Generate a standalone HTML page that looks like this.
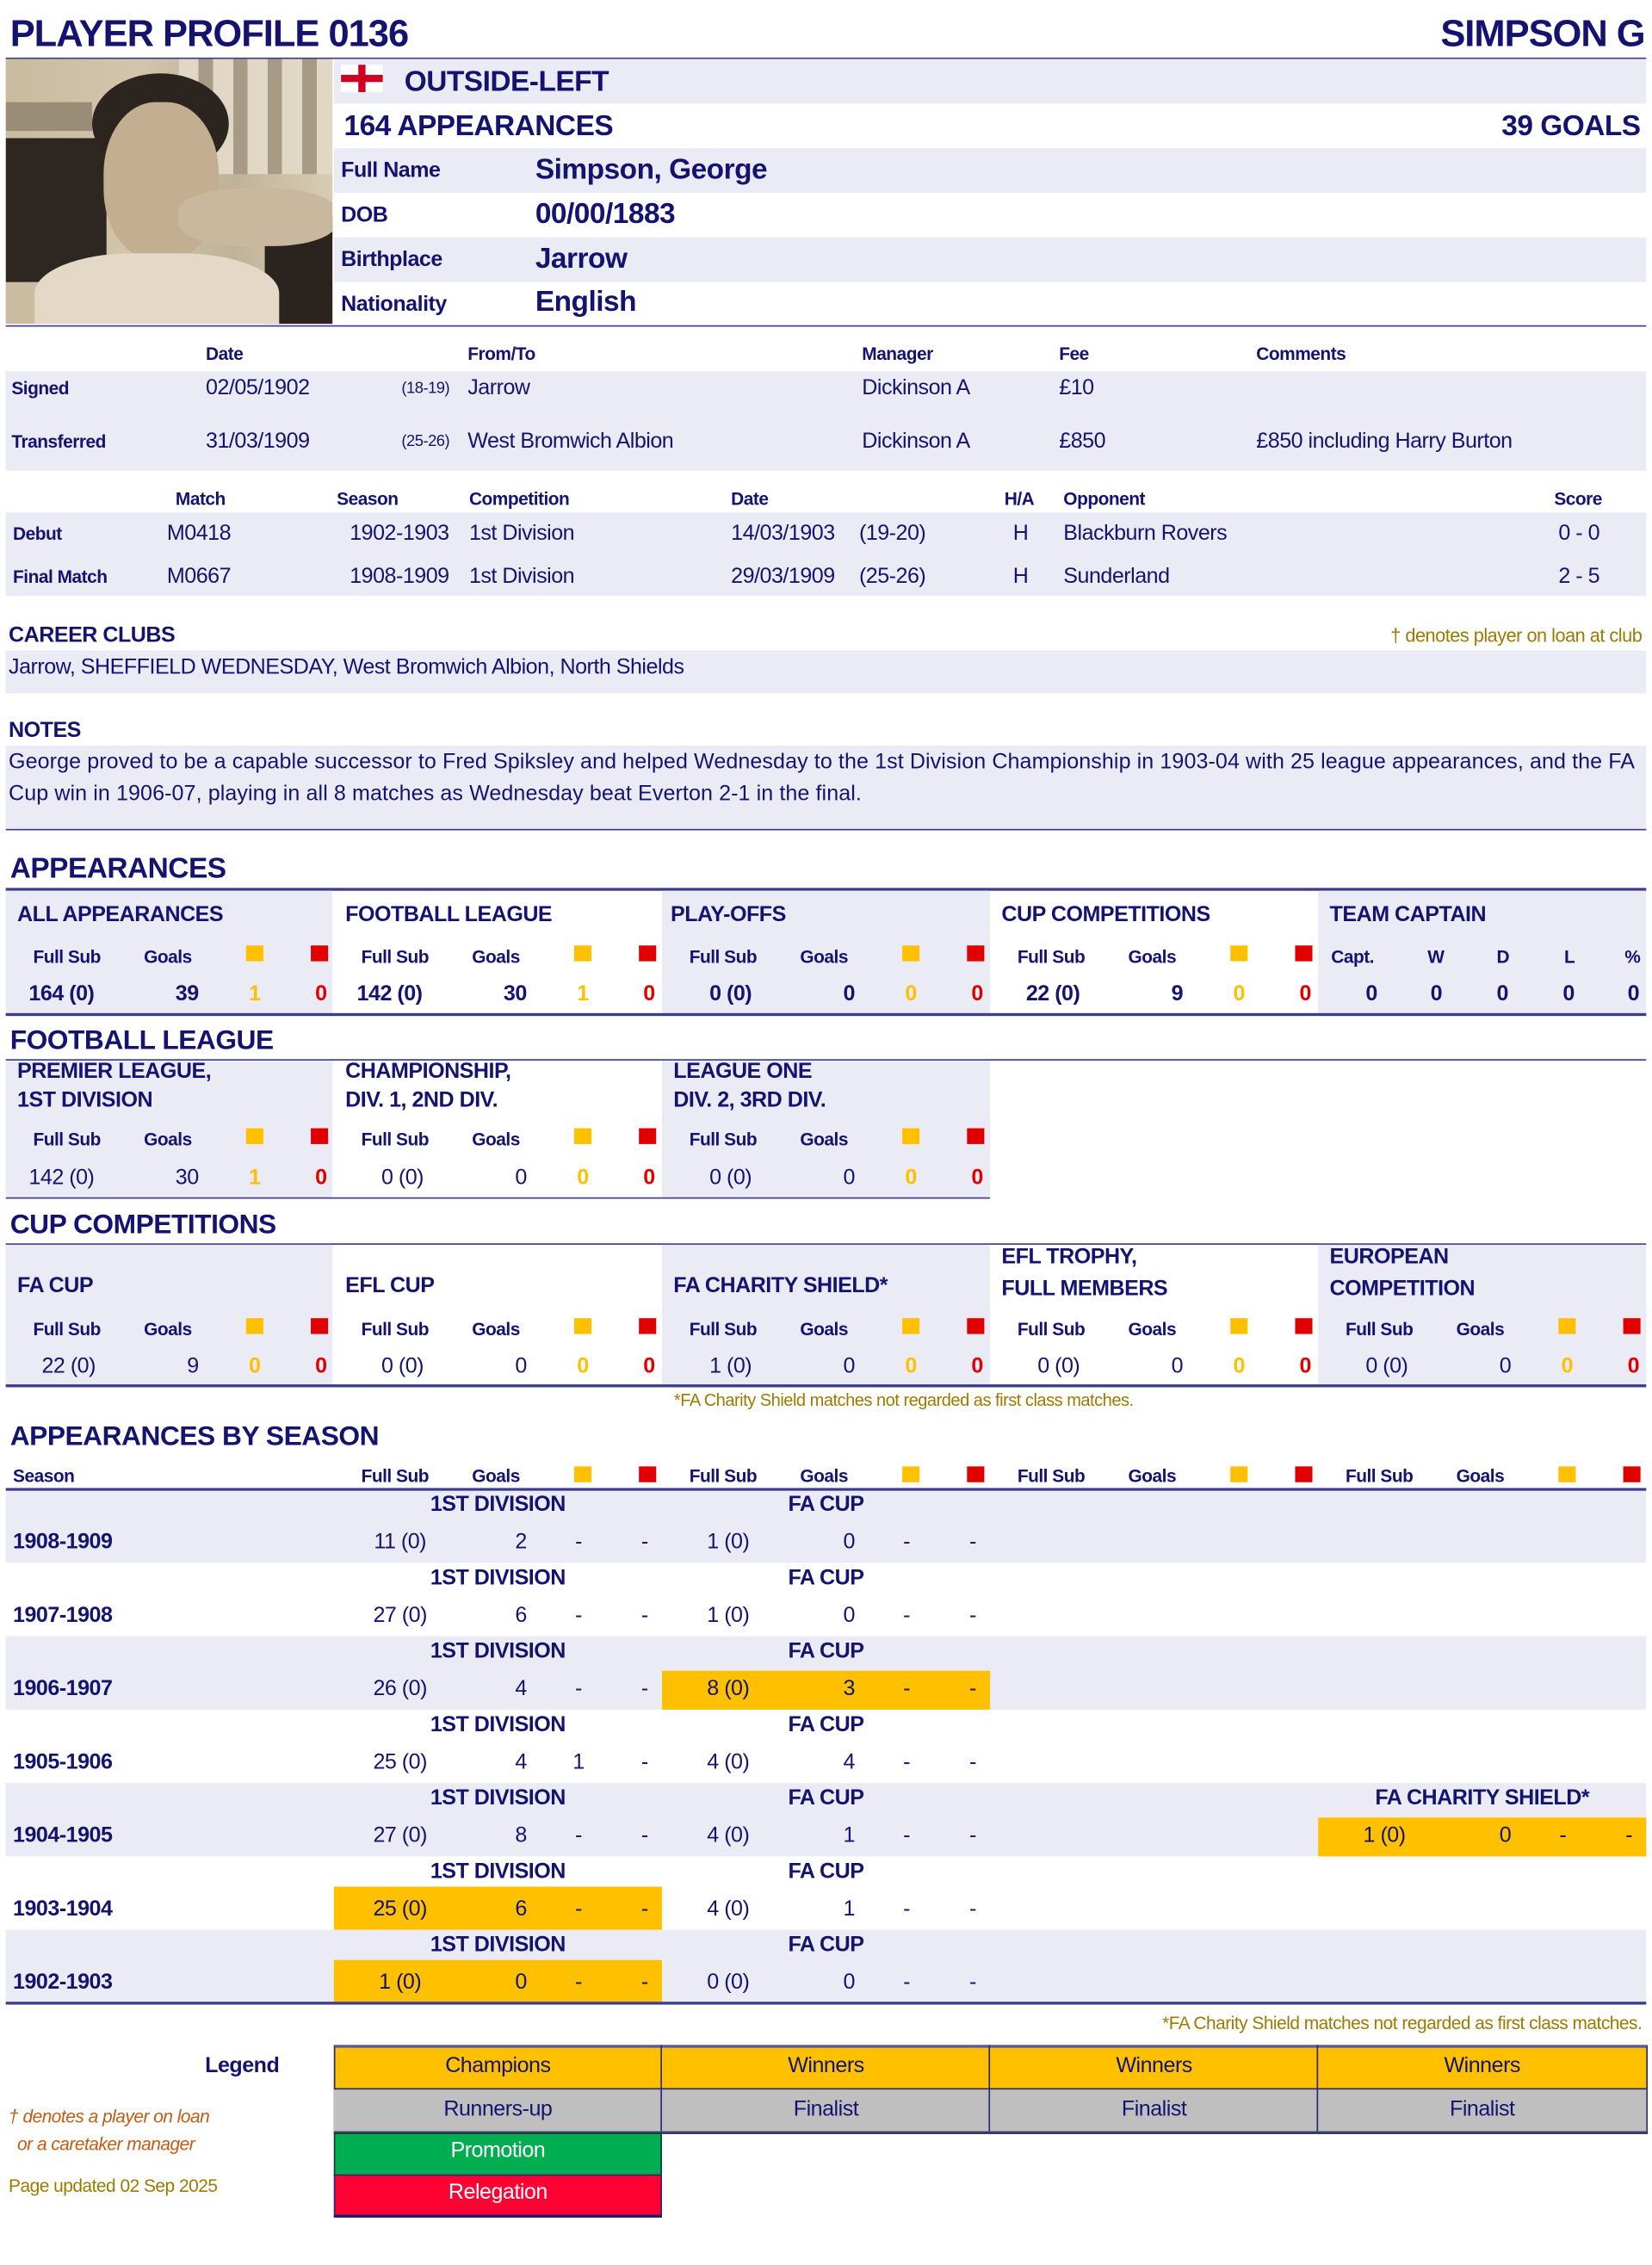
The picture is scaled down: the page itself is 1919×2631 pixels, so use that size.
<!DOCTYPE html>
<html><head><meta charset="utf-8">
<style>
html,body{margin:0;padding:0;background:#fff;}
body{width:1919px;height:2631px;overflow:hidden;position:relative;}
#w{position:absolute;left:0;top:0;width:1148px;height:1574px;transform:scale(1.6716);transform-origin:0 0;font-family:"Liberation Sans",Arial,sans-serif;color:#141470;}
.t{position:absolute;white-space:nowrap;line-height:20px;font-size:15px;letter-spacing:-0.3px;}
.b{font-weight:bold;}
.r{text-align:right;}
.c{text-align:center;}
.bx{position:absolute;}
.lav{background:#ebebf5;}
.ln{position:absolute;height:1px;background:#3c3c8c;}
.ln2{position:absolute;height:2px;background:#3c3c8c;}
.sh{font-size:12.5px;font-weight:bold;}
.y{position:absolute;width:12px;height:11px;background:#ffc000;}
.rd{position:absolute;width:12px;height:11px;background:#e00000;}
.yn{color:#ffc000;font-weight:bold;}
.rn{color:#e00000;font-weight:bold;}
.gold{color:#9c7a00;}
.hl{position:absolute;background:#ffc000;}
</style></head><body><div id="w">

<div class="t b" style="left:7px;top:8px;font-size:26px;line-height:30px;letter-spacing:-0.6px">PLAYER PROFILE 0136</div>
<div class="t b r" style="right:5px;top:8px;font-size:26px;line-height:30px;letter-spacing:-0.6px">SIMPSON G</div>
<div class="ln" style="left:4px;top:40px;width:1140px"></div>

<div class="bx" style="left:4px;top:41px;width:227px;height:184px;overflow:hidden;background:#cdbfa5">
 <div class="bx" style="left:0;top:0;width:227px;height:184px;background:linear-gradient(90deg,#c9bba0 0,#d2c5ab 40%,#bfb298 70%,#d8ccb3 100%)"></div>
 <div class="bx" style="left:0;top:55px;width:70px;height:100px;background:#2d2621"></div>
 <div class="bx" style="left:0;top:30px;width:60px;height:20px;background:#9a8d78"></div>
 <div class="bx" style="left:180px;top:110px;width:50px;height:80px;background:#2a231e"></div>
 <div class="bx" style="left:120px;top:0;width:107px;height:80px;background:repeating-linear-gradient(90deg,#e0d7c5 0,#e0d7c5 14px,#a89b86 14px,#a89b86 24px)"></div>
 <div class="bx" style="left:60px;top:10px;width:95px;height:70px;border-radius:50%;background:#2b241f"></div>
 <div class="bx" style="left:68px;top:30px;width:80px;height:110px;border-radius:45%;background:#c3ae92"></div>
 <div class="bx" style="left:120px;top:90px;width:110px;height:40px;border-radius:40%;background:#c9b89d"></div>
 <div class="bx" style="left:20px;top:135px;width:170px;height:70px;border-radius:40% 40% 0 0;background:#e3d9c6"></div>
</div>

<div class="bx lav" style="left:232px;top:41px;width:912px;height:31px"></div>
<div class="bx lav" style="left:232px;top:103px;width:912px;height:31px"></div>
<div class="bx lav" style="left:232px;top:165px;width:912px;height:31px"></div>
<div class="bx" style="left:237px;top:45px;width:29px;height:19px;background:#fff">
 <div class="bx" style="left:12px;top:0;width:5px;height:19px;background:#d00020"></div>
 <div class="bx" style="left:0;top:7px;width:29px;height:5px;background:#d00020"></div>
</div>
<div class="t b" style="left:281px;top:45px;font-size:20px;line-height:24px">OUTSIDE-LEFT</div>
<div class="t b" style="left:239px;top:76px;font-size:20px;line-height:24px">164 APPEARANCES</div>
<div class="t b r" style="right:8px;top:76px;font-size:20px;line-height:24px">39 GOALS</div>
<div class="t b" style="left:237px;top:109px">Full Name</div>
<div class="t b" style="left:372px;top:106px;font-size:20px;line-height:24px">Simpson, George</div>
<div class="t b" style="left:237px;top:140px">DOB</div>
<div class="t b" style="left:372px;top:137px;font-size:20px;line-height:24px">00/00/1883</div>
<div class="t b" style="left:237px;top:171px">Birthplace</div>
<div class="t b" style="left:372px;top:168px;font-size:20px;line-height:24px">Jarrow</div>
<div class="t b" style="left:237px;top:202px">Nationality</div>
<div class="t b" style="left:372px;top:198px;font-size:20px;line-height:24px">English</div>
<div class="ln" style="left:4px;top:226px;width:1140px"></div>

<div class="t sh" style="left:143px;top:236px">Date</div>
<div class="t sh" style="left:325px;top:236px">From/To</div>
<div class="t sh" style="left:599px;top:236px">Manager</div>
<div class="t sh" style="left:736px;top:236px">Fee</div>
<div class="t sh" style="left:873px;top:236px">Comments</div>
<div class="bx lav" style="left:4px;top:258px;width:1140px;height:69px"></div>
<div class="t sh" style="left:8px;top:260px">Signed</div>
<div class="t" style="left:143px;top:260px">02/05/1902</div>
<div class="t" style="left:279px;top:260px;font-size:11px">(18-19)</div>
<div class="t" style="left:325px;top:260px">Jarrow</div>
<div class="t" style="left:599px;top:260px">Dickinson A</div>
<div class="t" style="left:736px;top:260px">£10</div>
<div class="t sh" style="left:8px;top:297px">Transferred</div>
<div class="t" style="left:143px;top:297px">31/03/1909</div>
<div class="t" style="left:279px;top:297px;font-size:11px">(25-26)</div>
<div class="t" style="left:325px;top:297px">West Bromwich Albion</div>
<div class="t" style="left:599px;top:297px">Dickinson A</div>
<div class="t" style="left:736px;top:297px">£850</div>
<div class="t" style="left:873px;top:297px">£850 including Harry Burton</div>

<div class="t sh" style="left:122px;top:337px">Match</div>
<div class="t sh" style="left:234px;top:337px">Season</div>
<div class="t sh" style="left:326px;top:337px">Competition</div>
<div class="t sh" style="left:508px;top:337px">Date</div>
<div class="t sh" style="left:698px;top:337px">H/A</div>
<div class="t sh" style="left:739px;top:337px">Opponent</div>
<div class="t sh" style="left:1080px;top:337px">Score</div>
<div class="bx lav" style="left:4px;top:356px;width:1140px;height:58px"></div>
<div class="t sh" style="left:9px;top:361px">Debut</div>
<div class="t" style="left:116px;top:361px">M0418</div>
<div class="t" style="left:243px;top:361px">1902-1903</div>
<div class="t" style="left:326px;top:361px">1st Division</div>
<div class="t" style="left:508px;top:361px">14/03/1903</div>
<div class="t" style="left:597px;top:361px">(19-20)</div>
<div class="t" style="left:704px;top:361px">H</div>
<div class="t" style="left:739px;top:361px">Blackburn Rovers</div>
<div class="t" style="left:1083px;top:361px">0 - 0</div>
<div class="t sh" style="left:9px;top:391px">Final Match</div>
<div class="t" style="left:116px;top:391px">M0667</div>
<div class="t" style="left:243px;top:391px">1908-1909</div>
<div class="t" style="left:326px;top:391px">1st Division</div>
<div class="t" style="left:508px;top:391px">29/03/1909</div>
<div class="t" style="left:597px;top:391px">(25-26)</div>
<div class="t" style="left:704px;top:391px">H</div>
<div class="t" style="left:739px;top:391px">Sunderland</div>
<div class="t" style="left:1083px;top:391px">2 - 5</div>

<div class="t b" style="left:6px;top:432px">CAREER CLUBS</div>
<div class="t r gold" style="right:7px;top:432px;font-size:13px">† denotes player on loan at club</div>
<div class="bx lav" style="left:4px;top:452px;width:1140px;height:30px"></div>
<div class="t" style="left:6px;top:454px">Jarrow, SHEFFIELD WEDNESDAY, West Bromwich Albion, North Shields</div>

<div class="t b" style="left:6px;top:498px">NOTES</div>
<div class="bx lav" style="left:4px;top:518px;width:1140px;height:58px"></div>
<div class="t" style="left:6px;top:520px;letter-spacing:0.05px">George proved to be a capable successor to Fred Spiksley and helped Wednesday to the 1st Division Championship in 1903-04 with 25 league appearances, and the FA</div>
<div class="t" style="left:6px;top:542px;letter-spacing:0.05px">Cup win in 1906-07, playing in all 8 matches as Wednesday beat Everton 2-1 in the final.</div>
<div class="ln" style="left:4px;top:576px;width:1140px"></div>

<div class="t b" style="left:7px;top:592px;font-size:20px;line-height:24px">APPEARANCES</div>
<div class="ln2" style="left:4px;top:617px;width:1140px"></div>
<div class="bx lav" style="left:4px;top:619px;width:227px;height:86px"></div>
<div class="bx lav" style="left:460px;top:619px;width:228px;height:86px"></div>
<div class="bx lav" style="left:916px;top:619px;width:228px;height:86px"></div>

<div class="t b" style="left:12px;top:626px">ALL APPEARANCES</div>
<div class="t b" style="left:240px;top:626px">FOOTBALL LEAGUE</div>
<div class="t b" style="left:466px;top:626px">PLAY-OFFS</div>
<div class="t b" style="left:696px;top:626px">CUP COMPETITIONS</div>
<div class="t b" style="left:924px;top:626px">TEAM CAPTAIN</div>

<div class="t sh" style="left:23px;top:655px">Full Sub</div><div class="t sh" style="left:100px;top:655px">Goals</div><div class="y" style="left:171px;top:657px"></div><div class="rd" style="left:216px;top:657px"></div>
<div class="t sh" style="left:251px;top:655px">Full Sub</div><div class="t sh" style="left:328px;top:655px">Goals</div><div class="y" style="left:399px;top:657px"></div><div class="rd" style="left:444px;top:657px"></div>
<div class="t sh" style="left:479px;top:655px">Full Sub</div><div class="t sh" style="left:556px;top:655px">Goals</div><div class="y" style="left:627px;top:657px"></div><div class="rd" style="left:672px;top:657px"></div>
<div class="t sh" style="left:707px;top:655px">Full Sub</div><div class="t sh" style="left:784px;top:655px">Goals</div><div class="y" style="left:855px;top:657px"></div><div class="rd" style="left:900px;top:657px"></div>
<div class="t sh" style="left:925px;top:655px">Capt.</div><div class="t sh" style="left:992px;top:655px">W</div><div class="t sh" style="left:1040px;top:655px">D</div><div class="t sh" style="left:1087px;top:655px">L</div><div class="t sh" style="left:1129px;top:655px">%</div>

<div class="t b" style="left:20px;top:681px">164 (0)</div><div class="t b r" style="left:100px;width:38px;top:681px">39</div><div class="t yn" style="left:173px;top:681px">1</div><div class="t rn" style="left:219px;top:681px">0</div>
<div class="t b" style="left:248px;top:681px">142 (0)</div><div class="t b r" style="left:328px;width:38px;top:681px">30</div><div class="t yn" style="left:401px;top:681px">1</div><div class="t rn" style="left:447px;top:681px">0</div>
<div class="t b" style="left:493px;top:681px">0 (0)</div><div class="t b r" style="left:556px;width:38px;top:681px">0</div><div class="t yn" style="left:629px;top:681px">0</div><div class="t rn" style="left:675px;top:681px">0</div>
<div class="t b" style="left:713px;top:681px">22 (0)</div><div class="t b r" style="left:784px;width:38px;top:681px">9</div><div class="t yn" style="left:857px;top:681px">0</div><div class="t rn" style="left:903px;top:681px">0</div>
<div class="t b" style="left:949px;top:681px">0</div><div class="t b" style="left:994px;top:681px">0</div><div class="t b" style="left:1040px;top:681px">0</div><div class="t b" style="left:1086px;top:681px">0</div><div class="t b" style="left:1131px;top:681px">0</div>
<div class="ln2" style="left:4px;top:704px;width:1140px"></div>

<div class="t b" style="left:7px;top:713px;font-size:19px;line-height:22px">FOOTBALL LEAGUE</div>
<div class="ln" style="left:4px;top:736px;width:1140px"></div>
<div class="bx lav" style="left:4px;top:737px;width:227px;height:95px"></div>
<div class="bx lav" style="left:460px;top:737px;width:228px;height:95px"></div>
<div class="t b" style="left:12px;top:735px">PREMIER LEAGUE,</div><div class="t b" style="left:12px;top:755px">1ST DIVISION</div>
<div class="t b" style="left:240px;top:735px">CHAMPIONSHIP,</div><div class="t b" style="left:240px;top:755px">DIV. 1, 2ND DIV.</div>
<div class="t b" style="left:468px;top:735px">LEAGUE ONE</div><div class="t b" style="left:468px;top:755px">DIV. 2, 3RD DIV.</div>
<div class="t sh" style="left:23px;top:782px">Full Sub</div><div class="t sh" style="left:100px;top:782px">Goals</div><div class="y" style="left:171px;top:784px"></div><div class="rd" style="left:216px;top:784px"></div>
<div class="t sh" style="left:251px;top:782px">Full Sub</div><div class="t sh" style="left:328px;top:782px">Goals</div><div class="y" style="left:399px;top:784px"></div><div class="rd" style="left:444px;top:784px"></div>
<div class="t sh" style="left:479px;top:782px">Full Sub</div><div class="t sh" style="left:556px;top:782px">Goals</div><div class="y" style="left:627px;top:784px"></div><div class="rd" style="left:672px;top:784px"></div>
<div class="t" style="left:20px;top:809px">142 (0)</div><div class="t r" style="left:100px;width:38px;top:809px">30</div><div class="t yn" style="left:173px;top:809px">1</div><div class="t rn" style="left:219px;top:809px">0</div>
<div class="t" style="left:265px;top:809px">0 (0)</div><div class="t r" style="left:328px;width:38px;top:809px">0</div><div class="t yn" style="left:401px;top:809px">0</div><div class="t rn" style="left:447px;top:809px">0</div>
<div class="t" style="left:493px;top:809px">0 (0)</div><div class="t r" style="left:556px;width:38px;top:809px">0</div><div class="t yn" style="left:629px;top:809px">0</div><div class="t rn" style="left:675px;top:809px">0</div>
<div class="ln" style="left:4px;top:832px;width:684px"></div>

<div class="t b" style="left:7px;top:841px;font-size:19px;line-height:22px">CUP COMPETITIONS</div>
<div class="ln" style="left:4px;top:864px;width:1140px"></div>
<div class="bx lav" style="left:4px;top:865px;width:227px;height:98px"></div>
<div class="bx lav" style="left:460px;top:865px;width:228px;height:98px"></div>
<div class="bx lav" style="left:916px;top:865px;width:228px;height:98px"></div>
<div class="t b" style="left:12px;top:884px">FA CUP</div>
<div class="t b" style="left:240px;top:884px">EFL CUP</div>
<div class="t b" style="left:468px;top:884px">FA CHARITY SHIELD*</div>
<div class="t b" style="left:696px;top:864px">EFL TROPHY,</div><div class="t b" style="left:696px;top:886px">FULL MEMBERS</div>
<div class="t b" style="left:924px;top:864px">EUROPEAN</div><div class="t b" style="left:924px;top:886px">COMPETITION</div>
<div class="t sh" style="left:23px;top:914px">Full Sub</div><div class="t sh" style="left:100px;top:914px">Goals</div><div class="y" style="left:171px;top:916px"></div><div class="rd" style="left:216px;top:916px"></div>
<div class="t sh" style="left:251px;top:914px">Full Sub</div><div class="t sh" style="left:328px;top:914px">Goals</div><div class="y" style="left:399px;top:916px"></div><div class="rd" style="left:444px;top:916px"></div>
<div class="t sh" style="left:479px;top:914px">Full Sub</div><div class="t sh" style="left:556px;top:914px">Goals</div><div class="y" style="left:627px;top:916px"></div><div class="rd" style="left:672px;top:916px"></div>
<div class="t sh" style="left:707px;top:914px">Full Sub</div><div class="t sh" style="left:784px;top:914px">Goals</div><div class="y" style="left:855px;top:916px"></div><div class="rd" style="left:900px;top:916px"></div>
<div class="t sh" style="left:935px;top:914px">Full Sub</div><div class="t sh" style="left:1012px;top:914px">Goals</div><div class="y" style="left:1083px;top:916px"></div><div class="rd" style="left:1128px;top:916px"></div>
<div class="t" style="left:29px;top:940px">22 (0)</div><div class="t r" style="left:100px;width:38px;top:940px">9</div><div class="t yn" style="left:173px;top:940px">0</div><div class="t rn" style="left:219px;top:940px">0</div>
<div class="t" style="left:265px;top:940px">0 (0)</div><div class="t r" style="left:328px;width:38px;top:940px">0</div><div class="t yn" style="left:401px;top:940px">0</div><div class="t rn" style="left:447px;top:940px">0</div>
<div class="t" style="left:493px;top:940px">1 (0)</div><div class="t r" style="left:556px;width:38px;top:940px">0</div><div class="t yn" style="left:629px;top:940px">0</div><div class="t rn" style="left:675px;top:940px">0</div>
<div class="t" style="left:721px;top:940px">0 (0)</div><div class="t r" style="left:784px;width:38px;top:940px">0</div><div class="t yn" style="left:857px;top:940px">0</div><div class="t rn" style="left:903px;top:940px">0</div>
<div class="t" style="left:949px;top:940px">0 (0)</div><div class="t r" style="left:1012px;width:38px;top:940px">0</div><div class="t yn" style="left:1085px;top:940px">0</div><div class="t rn" style="left:1131px;top:940px">0</div>
<div class="ln2" style="left:4px;top:962px;width:1140px"></div>
<div class="t gold c" style="left:428px;width:400px;top:963px;font-size:12px">*FA Charity Shield matches not regarded as first class matches.</div>

<div class="t b" style="left:7px;top:988px;font-size:19px;line-height:22px">APPEARANCES BY SEASON</div>
<div class="t sh" style="left:9px;top:1016px">Season</div>
<div class="t sh" style="left:251px;top:1016px">Full Sub</div><div class="t sh" style="left:328px;top:1016px">Goals</div><div class="y" style="left:399px;top:1019px"></div><div class="rd" style="left:444px;top:1019px"></div>
<div class="t sh" style="left:479px;top:1016px">Full Sub</div><div class="t sh" style="left:556px;top:1016px">Goals</div><div class="y" style="left:627px;top:1019px"></div><div class="rd" style="left:672px;top:1019px"></div>
<div class="t sh" style="left:707px;top:1016px">Full Sub</div><div class="t sh" style="left:784px;top:1016px">Goals</div><div class="y" style="left:855px;top:1019px"></div><div class="rd" style="left:900px;top:1019px"></div>
<div class="t sh" style="left:935px;top:1016px">Full Sub</div><div class="t sh" style="left:1012px;top:1016px">Goals</div><div class="y" style="left:1083px;top:1019px"></div><div class="rd" style="left:1128px;top:1019px"></div>
<div class="ln2" style="left:4px;top:1034px;width:1140px"></div>

<div class="bx lav" style="left:4px;top:1036px;width:1140px;height:50px"></div>
<div class="bx lav" style="left:4px;top:1137px;width:1140px;height:51px"></div>
<div class="bx lav" style="left:4px;top:1239px;width:1140px;height:51px"></div>
<div class="bx lav" style="left:4px;top:1341px;width:1140px;height:50px"></div>
<div class="hl" style="left:460px;top:1161px;width:228px;height:27px"></div>
<div class="hl" style="left:916px;top:1263px;width:228px;height:27px"></div>
<div class="hl" style="left:232px;top:1311px;width:228px;height:30px"></div>
<div class="hl" style="left:232px;top:1362px;width:228px;height:29px"></div>

<div class="t b c" style="left:232px;width:228px;top:1036px">1ST DIVISION</div><div class="t b c" style="left:460px;width:228px;top:1036px">FA CUP</div>
<div class="t b" style="left:9px;top:1062px">1908-1909</div>
<div class="t c" style="left:248px;width:60px;top:1062px">11 (0)</div><div class="t r" style="left:330px;width:36px;top:1062px">2</div><div class="t c" style="left:395px;width:14px;top:1062px">-</div><div class="t c" style="left:441px;width:14px;top:1062px">-</div>
<div class="t c" style="left:476px;width:60px;top:1062px">1 (0)</div><div class="t r" style="left:558px;width:36px;top:1062px">0</div><div class="t c" style="left:623px;width:14px;top:1062px">-</div><div class="t c" style="left:669px;width:14px;top:1062px">-</div>
<div class="t b c" style="left:232px;width:228px;top:1087px">1ST DIVISION</div><div class="t b c" style="left:460px;width:228px;top:1087px">FA CUP</div>
<div class="t b" style="left:9px;top:1113px">1907-1908</div>
<div class="t c" style="left:248px;width:60px;top:1113px">27 (0)</div><div class="t r" style="left:330px;width:36px;top:1113px">6</div><div class="t c" style="left:395px;width:14px;top:1113px">-</div><div class="t c" style="left:441px;width:14px;top:1113px">-</div>
<div class="t c" style="left:476px;width:60px;top:1113px">1 (0)</div><div class="t r" style="left:558px;width:36px;top:1113px">0</div><div class="t c" style="left:623px;width:14px;top:1113px">-</div><div class="t c" style="left:669px;width:14px;top:1113px">-</div>
<div class="t b c" style="left:232px;width:228px;top:1138px">1ST DIVISION</div><div class="t b c" style="left:460px;width:228px;top:1138px">FA CUP</div>
<div class="t b" style="left:9px;top:1164px">1906-1907</div>
<div class="t c" style="left:248px;width:60px;top:1164px">26 (0)</div><div class="t r" style="left:330px;width:36px;top:1164px">4</div><div class="t c" style="left:395px;width:14px;top:1164px">-</div><div class="t c" style="left:441px;width:14px;top:1164px">-</div>
<div class="t c" style="left:476px;width:60px;top:1164px">8 (0)</div><div class="t r" style="left:558px;width:36px;top:1164px">3</div><div class="t c" style="left:623px;width:14px;top:1164px">-</div><div class="t c" style="left:669px;width:14px;top:1164px">-</div>
<div class="t b c" style="left:232px;width:228px;top:1189px">1ST DIVISION</div><div class="t b c" style="left:460px;width:228px;top:1189px">FA CUP</div>
<div class="t b" style="left:9px;top:1215px">1905-1906</div>
<div class="t c" style="left:248px;width:60px;top:1215px">25 (0)</div><div class="t r" style="left:330px;width:36px;top:1215px">4</div><div class="t c" style="left:395px;width:14px;top:1215px">1</div><div class="t c" style="left:441px;width:14px;top:1215px">-</div>
<div class="t c" style="left:476px;width:60px;top:1215px">4 (0)</div><div class="t r" style="left:558px;width:36px;top:1215px">4</div><div class="t c" style="left:623px;width:14px;top:1215px">-</div><div class="t c" style="left:669px;width:14px;top:1215px">-</div>
<div class="t b c" style="left:232px;width:228px;top:1240px">1ST DIVISION</div><div class="t b c" style="left:460px;width:228px;top:1240px">FA CUP</div><div class="t b c" style="left:916px;width:228px;top:1240px">FA CHARITY SHIELD*</div>
<div class="t b" style="left:9px;top:1266px">1904-1905</div>
<div class="t c" style="left:248px;width:60px;top:1266px">27 (0)</div><div class="t r" style="left:330px;width:36px;top:1266px">8</div><div class="t c" style="left:395px;width:14px;top:1266px">-</div><div class="t c" style="left:441px;width:14px;top:1266px">-</div>
<div class="t c" style="left:476px;width:60px;top:1266px">4 (0)</div><div class="t r" style="left:558px;width:36px;top:1266px">1</div><div class="t c" style="left:623px;width:14px;top:1266px">-</div><div class="t c" style="left:669px;width:14px;top:1266px">-</div>
<div class="t c" style="left:932px;width:60px;top:1266px">1 (0)</div><div class="t r" style="left:1014px;width:36px;top:1266px">0</div><div class="t c" style="left:1079px;width:14px;top:1266px">-</div><div class="t c" style="left:1125px;width:14px;top:1266px">-</div>
<div class="t b c" style="left:232px;width:228px;top:1291px">1ST DIVISION</div><div class="t b c" style="left:460px;width:228px;top:1291px">FA CUP</div>
<div class="t b" style="left:9px;top:1317px">1903-1904</div>
<div class="t c" style="left:248px;width:60px;top:1317px">25 (0)</div><div class="t r" style="left:330px;width:36px;top:1317px">6</div><div class="t c" style="left:395px;width:14px;top:1317px">-</div><div class="t c" style="left:441px;width:14px;top:1317px">-</div>
<div class="t c" style="left:476px;width:60px;top:1317px">4 (0)</div><div class="t r" style="left:558px;width:36px;top:1317px">1</div><div class="t c" style="left:623px;width:14px;top:1317px">-</div><div class="t c" style="left:669px;width:14px;top:1317px">-</div>
<div class="t b c" style="left:232px;width:228px;top:1342px">1ST DIVISION</div><div class="t b c" style="left:460px;width:228px;top:1342px">FA CUP</div>
<div class="t b" style="left:9px;top:1368px">1902-1903</div>
<div class="t c" style="left:248px;width:60px;top:1368px">1 (0)</div><div class="t r" style="left:330px;width:36px;top:1368px">0</div><div class="t c" style="left:395px;width:14px;top:1368px">-</div><div class="t c" style="left:441px;width:14px;top:1368px">-</div>
<div class="t c" style="left:476px;width:60px;top:1368px">0 (0)</div><div class="t r" style="left:558px;width:36px;top:1368px">0</div><div class="t c" style="left:623px;width:14px;top:1368px">-</div><div class="t c" style="left:669px;width:14px;top:1368px">-</div>
<div class="ln2" style="left:4px;top:1391px;width:1140px"></div>

<div class="t r gold" style="right:7px;top:1396px;font-size:12.5px">*FA Charity Shield matches not regarded as first class matches.</div>

<div class="t b r" style="left:100px;width:94px;top:1426px">Legend</div>
<div class="bx" style="left:232px;top:1421px;width:911px;height:59px;border:1px solid #2a2a70;border-top:2px solid #5a5aa0;background:#ffc000"></div>
<div class="bx" style="left:232px;top:1451px;width:912px;height:29px;background:#bfbfbf;border-top:1px solid #2a2a70;border-bottom:2px solid #3a3a6a"></div>
<div class="bx" style="left:459px;top:1421px;width:1px;height:60px;background:#2a2a70"></div>
<div class="bx" style="left:687px;top:1421px;width:1px;height:60px;background:#2a2a70"></div>
<div class="bx" style="left:915px;top:1421px;width:1px;height:60px;background:#2a2a70"></div>
<div class="bx" style="left:232px;top:1482px;width:226px;height:28px;background:#00ad50;border:1px solid #1a3a3a"></div>
<div class="bx" style="left:232px;top:1511px;width:226px;height:27px;background:#ff0033;border:1px solid #2a2a70;border-bottom:2px solid #1a1a70"></div>
<div class="t c" style="left:232px;width:228px;top:1426px">Champions</div>
<div class="t c" style="left:460px;width:228px;top:1426px">Winners</div>
<div class="t c" style="left:688px;width:228px;top:1426px">Winners</div>
<div class="t c" style="left:916px;width:228px;top:1426px">Winners</div>
<div class="t c" style="left:232px;width:228px;top:1456px">Runners-up</div>
<div class="t c" style="left:460px;width:228px;top:1456px">Finalist</div>
<div class="t c" style="left:688px;width:228px;top:1456px">Finalist</div>
<div class="t c" style="left:916px;width:228px;top:1456px">Finalist</div>
<div class="t c" style="left:232px;width:228px;top:1485px;color:#fff">Promotion</div>
<div class="t c" style="left:232px;width:228px;top:1514px;color:#fff">Relegation</div>
<div class="t" style="left:6px;top:1461px;font-size:12.5px;font-style:italic;color:#c55a11">† denotes a player on loan</div>
<div class="t" style="left:12px;top:1480px;font-size:12.5px;font-style:italic;color:#c55a11">or a caretaker manager</div>
<div class="t gold" style="left:6px;top:1509px;font-size:12.5px">Page updated 02 Sep 2025</div>

</div></body></html>
